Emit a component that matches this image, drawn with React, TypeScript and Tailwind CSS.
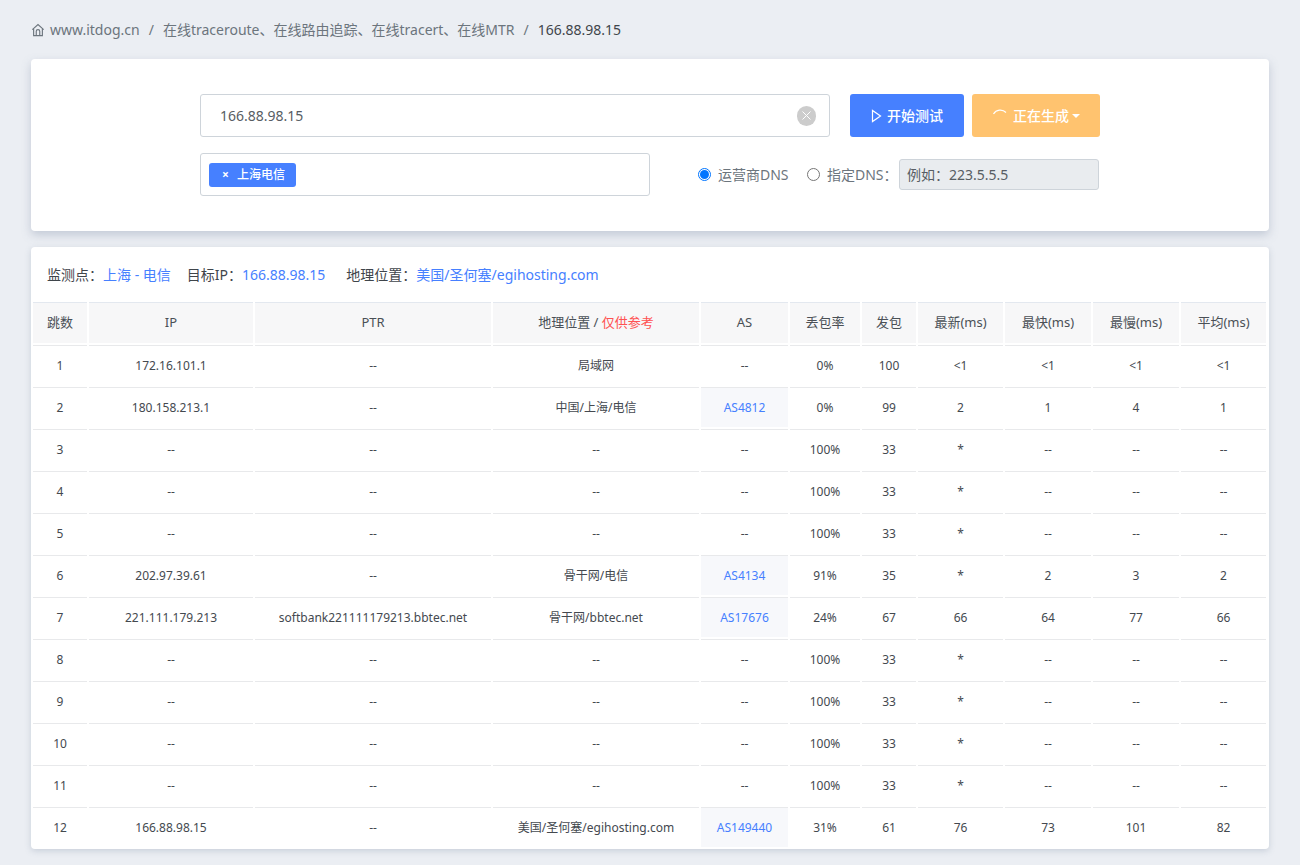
const font = "font-['Noto_Sans','Noto_Sans_CJK_SC',sans-serif]";

type Row = [string, string, string, string, string, string, string, string, string, string, string];
const d = "--";
const blank = (n: string): Row => [n, d, d, d, d, "100%", "33", "*", d, d, d];
const rows: Row[] = [
  ["1", "172.16.101.1", d, "局域网", d, "0%", "100", "<1", "<1", "<1", "<1"],
  ["2", "180.158.213.1", d, "中国/上海/电信", "AS4812", "0%", "99", "2", "1", "4", "1"],
  blank("3"),
  blank("4"),
  blank("5"),
  ["6", "202.97.39.61", d, "骨干网/电信", "AS4134", "91%", "35", "*", "2", "3", "2"],
  ["7", "221.111.179.213", "softbank221111179213.bbtec.net", "骨干网/bbtec.net", "AS17676", "24%", "67", "66", "64", "77", "66"],
  blank("8"),
  blank("9"),
  blank("10"),
  blank("11"),
  ["12", "166.88.98.15", d, "美国/圣何塞/egihosting.com", "AS149440", "31%", "61", "76", "73", "101", "82"],
];
const widths = [54, 164, 236, 206, 87, 70, 54, 85, 86, 86, 85];
const heads = ["跳数", "IP", "PTR", "", "AS", "丢包率", "发包", "最新(ms)", "最快(ms)", "最慢(ms)", "平均(ms)"];

export default function App() {
  return (
    <div className={`${font} min-h-[865px] bg-[#ebeef3] px-[31px] text-[#4a4f55]`}>
      <nav className="flex h-[59px] items-center text-[14px] text-[#6c757d]">
        <svg width="14" height="14" viewBox="0 0 16 16" fill="none" stroke="currentColor" strokeWidth="1.3" className="mr-[5px] mt-px">
          <path d="M1.500 7.500 8 1.800l6.500 5.700" />
          <path d="M3 6.500V14.500h10V6.500" />
          <path d="M6 14.500V9.500a2 2 0 0 1 4 0v5" />
        </svg>
        <span>www.itdog.cn</span>
        <span className="mx-[9px]">/</span>
        <span>在线traceroute、在线路由追踪、在线tracert、在线MTR</span>
        <span className="mx-[9px]">/</span>
        <span className="text-[#3f454b]">166.88.98.15</span>
      </nav>

      <section className="flex h-[172px] justify-center rounded bg-white pt-[35px] shadow-[0_4px_10px_rgba(120,135,160,0.35)]">
        <div className="w-[900px]">
          <div className="flex">
            <div className="flex h-[43px] w-[630px] items-center justify-between rounded-[3px] border border-[#ced4da] pl-[19px] pr-[13px] text-[14px] text-[#575d63]">
              <span>166.88.98.15</span>
              <span className="flex h-[20px] w-[19px] items-center justify-center rounded-full bg-[#cccccc]">
                <svg width="11" height="11" viewBox="0 0 11 11" stroke="white" strokeWidth="1"><path d="M1.500 1.500l8 8M9.500 1.500l-8 8" /></svg>
              </span>
            </div>
            <button className="ml-5 flex h-[43px] w-[114px] items-center justify-center rounded-[3px] bg-[#4680ff] text-[14px] font-medium text-white">
              <svg width="11" height="14" viewBox="0 0 11 14" fill="none" stroke="white" strokeWidth="1.200" className="mr-[5px]"><path d="M1.500 1.500v11l8-5.500z" /></svg>
              开始测试
            </button>
            <button className="ml-2 flex h-[43px] w-[128px] items-center justify-center rounded-[3px] bg-[#ffc36f] text-[14px] font-medium text-white">
              <svg width="16" height="16" viewBox="0 0 16 16" fill="none" stroke="white" strokeWidth="1.200" className="mr-[5px] mb-[2px]"><path d="M1.500 7A8 8 0 0 1 14 5.500" /></svg>
              正在生成
              <span className="ml-[3px] mt-px h-0 w-0 border-x-[4px] border-t-[4px] border-x-transparent border-t-white" />
            </button>
          </div>
          <div className="mt-[16px] flex items-center">
            <div className="flex h-[43px] w-[450px] items-center rounded-[3px] border border-[#ced4da] px-2">
              <span className="flex h-6 w-[87px] items-center justify-center rounded-[3px] bg-[#4680ff] text-[12px] font-medium text-white">
                <span className="mr-[8px] ml-[2px] text-[12px] font-bold">×</span>上海电信
              </span>
            </div>
            <label className="ml-[48px] flex items-center text-[14px] text-[#6c757d]">
              <span className="mr-[7px] flex h-[13px] w-[13px] items-center justify-center rounded-full border border-[#0075ff]">
                <span className="h-[9px] w-[9px] rounded-full bg-[#0075ff]" />
              </span>
              <span className="w-[72px] whitespace-nowrap">运营商DNS</span>
            </label>
            <label className="ml-[17px] flex items-center text-[14px] text-[#6c757d]">
              <span className="mr-[7px] h-[13px] w-[13px] rounded-full border border-[#767676]" />
              <span className="w-[72px] whitespace-nowrap">指定DNS：</span>
            </label>
            <div className="flex h-[31px] w-[200px] items-center rounded-[3px] border border-[#ced4da] bg-[#e9ecef] pl-[7px] text-[14px] text-[#575d63]">
              例如：223.5.5.5
            </div>
          </div>
        </div>
      </section>

      <section className="mt-4 h-[602px] rounded bg-white shadow-[0_2px_6px_rgba(120,135,160,0.3)]">
        <div className="flex h-[53px] items-center pl-4 pt-[1px] text-[14px] text-[#3f454b]">
          监测点：<span className="text-[#4680ff]">上海 - 电信</span>
          <span className="ml-4">目标IP：</span><span className="text-[#4680ff]">166.88.98.15</span>
          <span className="ml-[21px]">地理位置：</span><span className="text-[#4680ff]">美国/圣何塞/egihosting.com</span>
        </div>
        <table className="w-[1237px] table-fixed border-separate border-spacing-[2px] text-center text-[12px] text-[#44494f]">
          <colgroup>
            {widths.map((w, i) => <col key={i} style={{ width: w }} />)}
          </colgroup>
          <thead>
            <tr>
              {heads.map((h, i) => (
                <th key={i} className="h-[41px] border-t border-t-[#e3e8ef] bg-[#f7f7f8] p-0 text-[13px] font-normal text-[#4a5056]">
                  {i === 3 ? <>地理位置 / <span className="text-[#ff5252]">仅供参考</span></> : h}
                </th>
              ))}
            </tr>
          </thead>
          <tbody>
            {rows.map((r, ri) => (
              <tr key={ri}>
                {r.map((c, i) => (
                  <td key={i} className={`h-[40px] border-t border-t-[#e8e9eb] p-0 ${i === 4 && c !== d ? "bg-[#f7f8fb] text-[#4680ff]" : ""}`}>
                    {c}
                  </td>
                ))}
              </tr>
            ))}
          </tbody>
        </table>
      </section>
    </div>
  );
}
